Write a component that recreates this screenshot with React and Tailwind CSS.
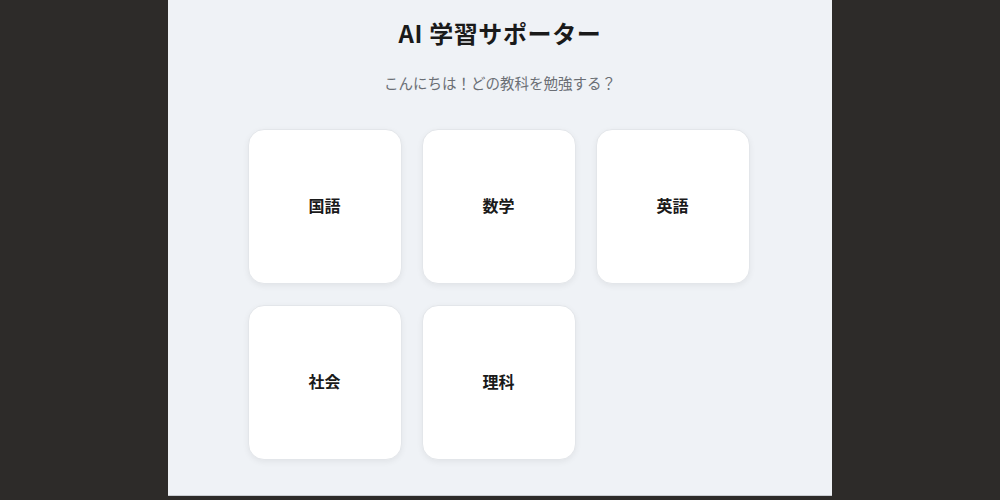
export default function App() {
  const subjects = ["国語", "数学", "英語", "社会", "理科"];
  return (
    <div className="w-[1000px] h-[500px] bg-[#2d2b29] overflow-hidden" style={{ fontFamily: '"Noto Sans CJK JP", "Noto Sans", sans-serif' }}>
      <div className="mx-auto w-[664px] h-[496px] bg-[#eff2f6] border-b border-[#c9cdd2] flex flex-col items-center">
        <h1 className="mt-[17px] h-[32px] leading-[32px] text-[24px] font-bold text-[#1a1a1a] tracking-wide">AI 学習サポーター</h1>
        <p className="mt-[23px] h-[22px] leading-[22px] text-[14.5px] text-[#6b6f75]">こんにちは！どの教科を勉強する？</p>
        <div className="mt-[35px] ml-[-3px] grid grid-cols-3 gap-x-[20px] gap-y-[21px]">
          {subjects.map((s) => (
            <div key={s} className="w-[154px] h-[155px] bg-white rounded-[16px] border border-[#e3e6ea] shadow-[0_2px_6px_rgba(0,0,0,0.06)] flex items-center justify-center pb-[3px]">
              <span className="text-[16px] font-bold text-[#1a1a1a]">{s}</span>
            </div>
          ))}
        </div>
      </div>
    </div>
  );
}
